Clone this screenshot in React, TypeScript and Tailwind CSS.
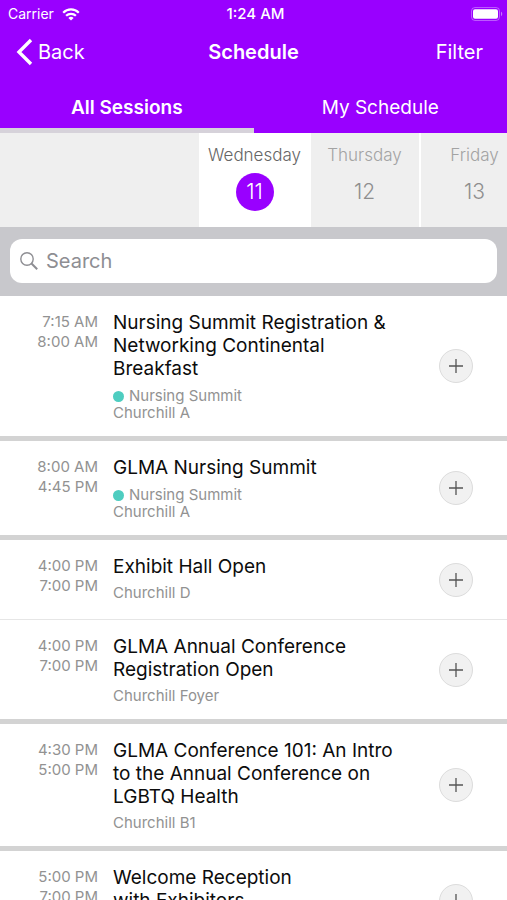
import { useState } from "react";

type Session = {
  id: number;
  start: string;
  end: string;
  lines: string[];
  track?: string;
  location: string;
  lastInGroup: boolean;
};

const days = [
  { name: "Wednesday", date: 11 },
  { name: "Thursday", date: 12 },
  { name: "Friday", date: 13 },
];

const sessions: Session[] = [
  {
    id: 1,
    start: "7:15 AM",
    end: "8:00 AM",
    lines: ["Nursing Summit Registration &", "Networking Continental", "Breakfast"],
    track: "Nursing Summit",
    location: "Churchill A",
    lastInGroup: true,
  },
  {
    id: 2,
    start: "8:00 AM",
    end: "4:45 PM",
    lines: ["GLMA Nursing Summit"],
    track: "Nursing Summit",
    location: "Churchill A",
    lastInGroup: true,
  },
  {
    id: 3,
    start: "4:00 PM",
    end: "7:00 PM",
    lines: ["Exhibit Hall Open"],
    location: "Churchill D",
    lastInGroup: false,
  },
  {
    id: 4,
    start: "4:00 PM",
    end: "7:00 PM",
    lines: ["GLMA Annual Conference", "Registration Open"],
    location: "Churchill Foyer",
    lastInGroup: true,
  },
  {
    id: 5,
    start: "4:30 PM",
    end: "5:00 PM",
    lines: ["GLMA Conference 101: An Intro", "to the Annual Conference on", "LGBTQ Health"],
    location: "Churchill B1",
    lastInGroup: true,
  },
  {
    id: 6,
    start: "5:00 PM",
    end: "7:00 PM",
    lines: ["Welcome Reception", "with Exhibitors"],
    location: "Churchill D",
    lastInGroup: true,
  },
];

const WifiIcon = () => (
  <svg width="18" height="13" viewBox="0 0 18 13" fill="none" stroke="white" strokeWidth="2.2" aria-hidden="true">
    <path d="M1.2 4.7C5.5.3 12.5.3 16.8 4.7" />
    <path d="M4.1 7.8c2.7-2.7 7.1-2.7 9.8 0" />
    <path d="M9 12.6 6.4 9.9c1.5-1.4 3.7-1.4 5.2 0z" fill="white" stroke="none" />
  </svg>
);

const BatteryIcon = () => (
  <svg width="32" height="14" viewBox="0 0 32 14" fill="none" aria-hidden="true">
    <rect x="0.5" y="0.5" width="28" height="13" rx="3.5" stroke="white" strokeOpacity="0.35" />
    <rect x="2" y="2.2" width="25" height="9.6" rx="2" fill="white" />
    <path d="M30 4.8c1.6.6 1.6 3.8 0 4.4z" fill="white" fillOpacity="0.45" />
  </svg>
);

const StatusBar = () => (
  <div className="grid grid-cols-3 items-center h-7 pl-2 pr-1 text-sm">
    <div className="flex items-center gap-2">
      <span>Carrier</span>
      <WifiIcon />
    </div>
    <span className="text-center text-[15px] font-medium">1:24 AM</span>
    <div className="flex justify-end">
      <BatteryIcon />
    </div>
  </div>
);

const SessionRow = ({ session }: { session: Session }) => {
  const [added, setAdded] = useState(false);

  return (
    <li
      className={`flex items-center min-h-20 ${
        session.lastInGroup ? "border-b-5 border-[#d3d3d3]" : "border-b border-[#e6e6e6]"
      }`}
    >
      <div className="self-start w-[98px] shrink-0 pt-4 text-right text-[15px] leading-5 text-[#929292]">
        <div>{session.start}</div>
        <div>{session.end}</div>
      </div>
      <div className="self-start flex-1 pl-[15px] py-[15px]">
        <h2 className="text-[19px] leading-[23px] text-[#0c0c0c]">
          {session.lines.map((line) => (
            <span key={line} className="block whitespace-nowrap">
              {line}
            </span>
          ))}
        </h2>
        <div className="pt-[7px] text-[15px] leading-4 text-[#929292]">
          {session.track && (
            <div className="flex items-center gap-[5px] h-[18px]">
              <span className="w-[11px] h-[11px] rounded-full bg-[#4ecdc0]" />
              {session.track}
            </div>
          )}
          <div>{session.location}</div>
        </div>
      </div>
      <button
        type="button"
        aria-label={`Add ${session.lines.join(" ")}`}
        aria-pressed={added}
        onClick={() => setAdded(!added)}
        className="w-[34px] h-[34px] shrink-0 mr-[34px] flex items-center justify-center rounded-full border border-[#dcdcdc] bg-[#f1f1f1]"
      >
        <svg width="14" height="14" viewBox="0 0 14 14" stroke="#555" strokeWidth="1.3" aria-hidden="true">
          <path d="M7 0v14M0 7h14" />
        </svg>
      </button>
    </li>
  );
};

const App = () => {
  const [tab, setTab] = useState("all");
  const [selected, setSelected] = useState(11);

  return (
    <div className="h-screen overflow-hidden flex flex-col bg-white font-['Inter',sans-serif]">
      <header className="shrink-0 bg-[#9900ff] text-white">
        <StatusBar />
        <div className="grid grid-cols-3 items-center h-12 px-4 text-[20px]">
          <button type="button" className="flex items-center gap-[5px]">
            <svg width="17" height="28" viewBox="0 0 17 28" fill="none" stroke="white" strokeWidth="3.4" aria-hidden="true">
              <path d="M15 2 3 14l12 12" />
            </svg>
            Back
          </button>
          <h1 className="text-center font-semibold">Schedule</h1>
          <button type="button" className="pr-2 text-right">
            Filter
          </button>
        </div>
        <nav className="grid grid-cols-2 h-[57px] text-[19px]">
          <button
            type="button"
            onClick={() => setTab("all")}
            className={`pt-3 border-b-5 ${tab === "all" ? "font-semibold border-[#d6d2da]" : "border-transparent"}`}
          >
            All Sessions
          </button>
          <button
            type="button"
            onClick={() => setTab("mine")}
            className={`pt-3 border-b-5 ${tab === "mine" ? "font-semibold border-[#d6d2da]" : "border-transparent"}`}
          >
            My Schedule
          </button>
        </nav>
      </header>

      <div className="shrink-0 flex h-[94px] overflow-hidden bg-[#efefef]">
        <div className="w-[calc(50%-55px)] shrink-0" />
        {days.map((day) => (
          <button
            key={day.date}
            type="button"
            onClick={() => setSelected(day.date)}
            className={`w-[110px] shrink-0 flex flex-col items-center gap-2 pt-3 border-l-2 border-white ${
              day.date === selected ? "bg-white text-[#666]" : "text-[#a3a3a3]"
            }`}
          >
            <span className="text-[17px] leading-5 font-light">{day.name}</span>
            <span
              className={`w-[38px] h-[38px] flex items-center justify-center rounded-full text-[21px] font-light ${
                day.date === selected ? "bg-[#9900ff] text-white" : "text-[#8e8e8e]"
              }`}
            >
              {day.date}
            </span>
          </button>
        ))}
      </div>

      <div className="shrink-0 bg-[#c8c8cc] px-[10px] pt-3 pb-[13px]">
        <label className="flex items-center gap-2 h-11 px-[10px] rounded-xl bg-white">
          <svg width="18" height="18" viewBox="0 0 18 18" fill="none" stroke="#8e8e93" strokeWidth="1.4" aria-hidden="true">
            <circle cx="7" cy="7" r="6.2" />
            <path d="m11.5 11.5 5.7 5.7" strokeWidth="2" />
          </svg>
          <input
            type="search"
            aria-label="Search"
            placeholder="Search"
            className="flex-1 text-[20px] text-black outline-none placeholder:text-[#8e8e93]"
          />
        </label>
      </div>

      <ul className="flex-1 overflow-hidden">
        {sessions.map((session) => (
          <SessionRow key={session.id} session={session} />
        ))}
      </ul>
    </div>
  );
};

export default App;
